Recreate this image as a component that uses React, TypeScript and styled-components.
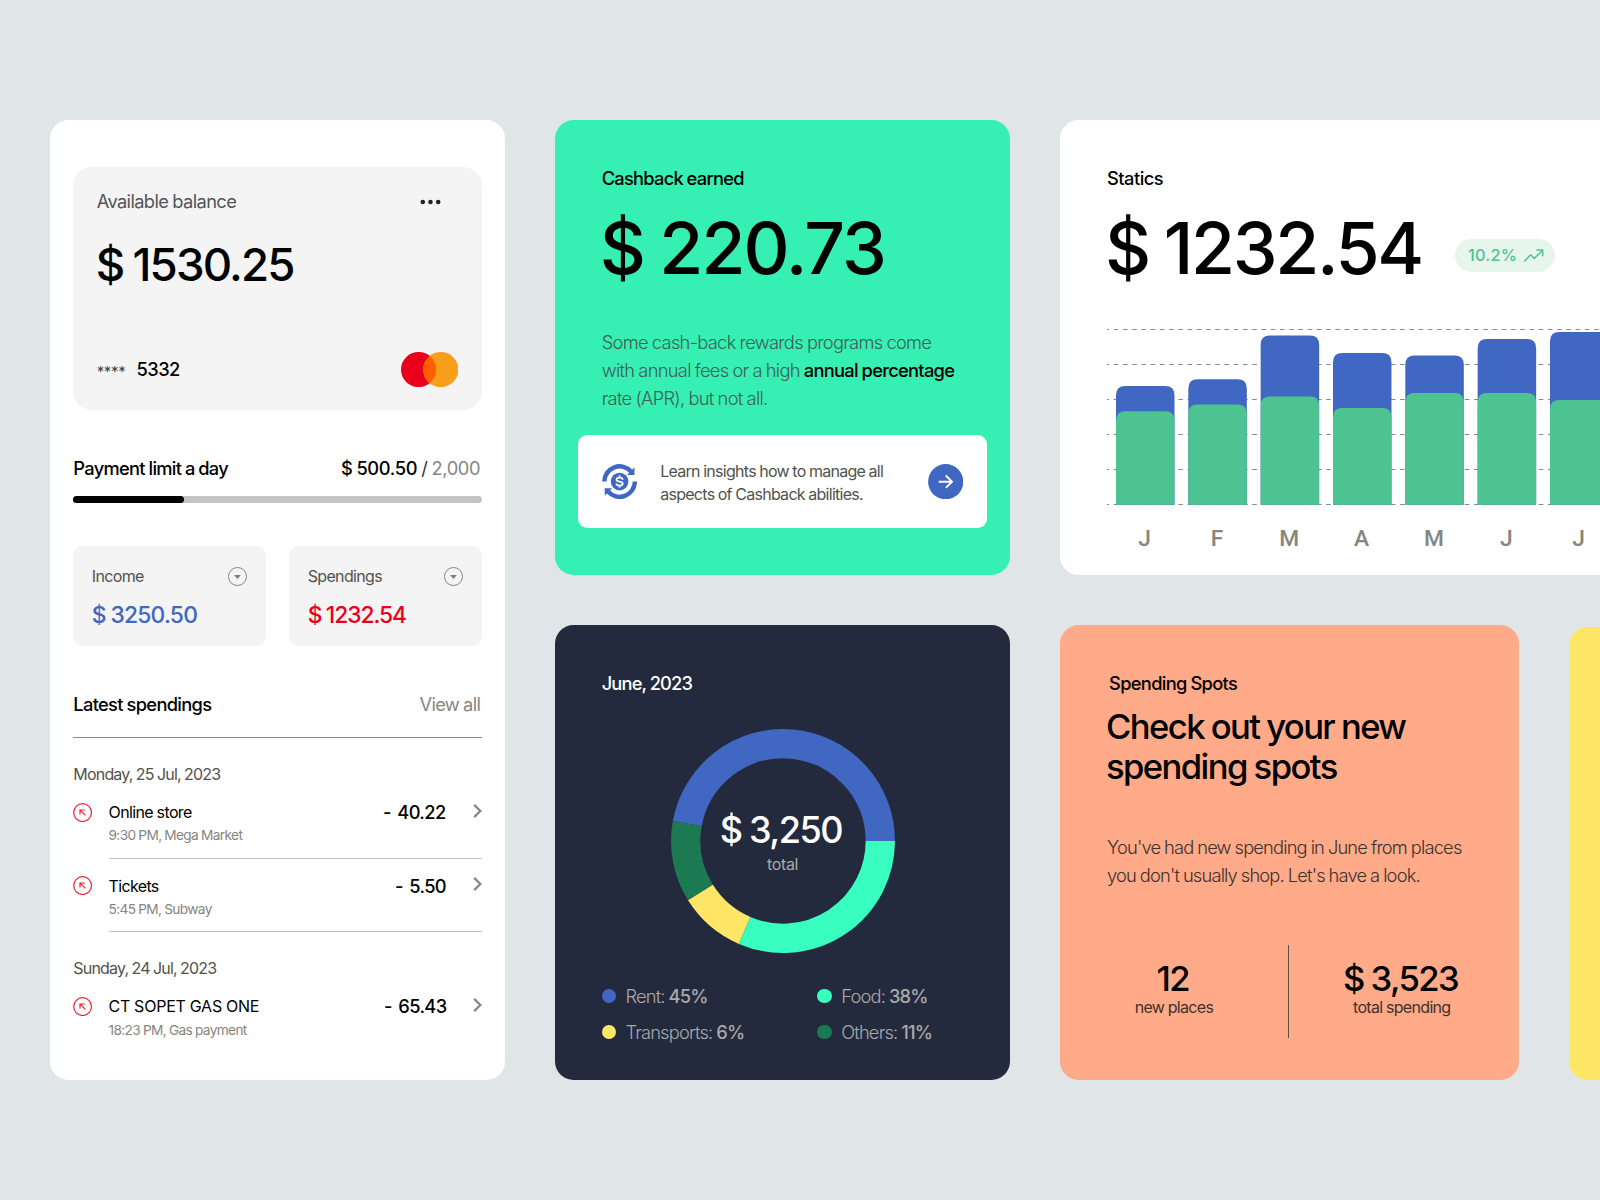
import React from "react";
import styled, { createGlobalStyle, css } from "styled-components";

const sans = `Inter, "Liberation Sans", sans-serif`;

const c = {
  page: "#e0e6e8",
  black: "#000",
  blue: "#4067c1",
  red: "#eb001b",
  mint: "#38ffc0",
  cashback: "#36f0b3",
  navy: "#242a3d",
  peach: "#ffaa88",
  yellow: "#ffe666",
  forest: "#1c7a52",
  bar: "#4dc391",
  tile: "#f4f4f4",
  grey: "#86867f",
  text: "#52524c",
};

const GlobalStyle = createGlobalStyle`
  *, *::before, *::after { box-sizing: border-box; }
  html, body { margin: 0; padding: 0; background: ${c.page}; }
  body { font-family: ${sans}; -webkit-font-smoothing: antialiased; color: ${c.black}; }
  svg { display: block; flex: none; }
`;

const font = (size: number, line: number, weight: number, track = -0.03) => css`
  font-size: ${size}px;
  line-height: ${line}px;
  font-weight: ${weight};
  letter-spacing: ${track}em;
  word-spacing: -0.025em;
  white-space: nowrap;
`;

/* ---------- page ---------- */

const Page = styled.main`
  width: 1600px;
  height: 1200px;
  overflow: hidden;
  padding: 120px 0 0 50px;
  background: ${c.page};
  display: flex;
  gap: 50px;
`;

const Column = styled.div<{ $width: number }>`
  width: ${(p) => p.$width}px;
  flex: none;
  display: flex;
  flex-direction: column;
  gap: 50px;
`;

const Row = styled.div`
  display: flex;
  align-items: flex-start;
  gap: 50.5px;
`;

const Panel = styled.section<{ $bg: string }>`
  background: ${(p) => p.$bg};
  border-radius: 18.5px;
`;

const Eyebrow = styled.h2<{ $color?: string; $track?: number }>`
  margin: 0;
  color: ${(p) => p.$color ?? c.black};
  ${(p) => font(18.3, 24, 500, p.$track ?? -0.037)}
`;

const Huge = styled.div<{ $track: number }>`
  margin: 15.3px 0 0 -2px;
  ${(p) => font(71.5, 84, 530, p.$track)}
`;

/* ---------- account panel ---------- */

const AccountPanel = styled(Panel)`
  height: 960px;
  padding: 46.7px 23.33px 0;
`;

const BalanceCard = styled.div`
  height: 243.6px;
  padding: 22.5px 23.33px 23px;
  border-radius: 18.5px;
  background: ${c.tile};
  display: flex;
  flex-direction: column;
`;

const BalanceTop = styled.div`
  display: flex;
  justify-content: space-between;
  align-items: center;
  padding-right: 17px;
  svg { margin-top: 1px; }
`;

const BalanceLabel = styled.span`
  color: #505655;
  ${font(18.3, 24, 400, -0.034)}
`;

const BalanceAmount = styled.div`
  margin: 24px 0 0 -1px;
  ${font(45.6, 56, 520, -0.04)}
`;

const BalanceBottom = styled.div`
  margin-top: auto;
  display: flex;
  align-items: center;
  justify-content: space-between;
`;

const CardNumber = styled.div`
  display: flex;
  align-items: center;
  gap: 11px;
  padding-bottom: 1px;
  ${font(18.3, 24, 500, -0.03)}
`;

const Mask = styled.span`
  color: #444;
  ${font(15, 24, 400, -0.02)}
  padding-top: 5px;
`;

const SplitRow = styled.div`
  margin-top: 46px;
  display: flex;
  justify-content: space-between;
`;

const Limit = styled.span`
  margin-right: 1.5px;
  ${font(18.3, 24, 500, -0.02)}
  em { font-style: normal; font-weight: 400; color: #333; }
  small { font-size: inherit; font-weight: 400; color: ${c.grey}; }
`;

const Track = styled.div`
  margin-top: 15.4px;
  height: 7px;
  border-radius: 4px;
  background: #c3c5c4;
`;

const Fill = styled.div`
  width: 111px;
  height: 7px;
  border-radius: 4px;
  background: ${c.black};
`;

const Tiles = styled.div`
  margin-top: 43.2px;
  display: grid;
  grid-template-columns: 1fr 1fr;
  gap: 23.33px;
`;

const Tile = styled.div`
  height: 100px;
  padding: 20.2px 18.5px 0;
  border-radius: 9.3px;
  background: ${c.tile};
`;

const TileHead = styled.div`
  display: flex;
  justify-content: space-between;
  align-items: center;
  color: ${c.text};
  ${font(16, 20, 380, -0.041)}
`;

const TileAmount = styled.div<{ $color: string; $track: number }>`
  margin-top: 14.8px;
  color: ${(p) => p.$color};
  ${(p) => font(22.8, 28, 500, p.$track)}
`;

const ListHead = styled.div`
  margin-top: 46px;
  padding-bottom: 21.2px;
  border-bottom: 1px solid #8d8d8b;
  display: flex;
  justify-content: space-between;
`;

const ViewAll = styled.span`
  margin-right: 1.5px;
  color: ${c.grey};
  ${font(18.3, 24, 400, -0.037)}
`;

const DateLabel = styled.div`
  margin: 25.7px 0 18.4px;
  color: ${c.text};
  ${font(16, 20, 380, -0.051)}
`;

const Item = styled.div`
  display: flex;
  gap: 16px;
  & + & { margin-top: 17.2px; }
`;

const ItemIcon = styled.div`
  width: 19.2px;
  flex: none;
  padding-top: 0.4px;
`;

const ItemBody = styled.div<{ $line: boolean }>`
  flex: 1;
  padding-bottom: 13.2px;
  border-bottom: 1px solid ${(p) => (p.$line ? "#c0c1c0" : "transparent")};
`;

const ItemRow = styled.div`
  display: flex;
  height: 20px;
  svg { margin-top: 1.4px; }
`;

const ItemTitle = styled.span<{ $track: number }>`
  flex: 1;
  ${(p) => font(16, 20, 400, p.$track)}
`;

const ItemAmount = styled.span<{ $inset: number }>`
  margin-right: ${(p) => p.$inset}px;
  display: flex;
  gap: 6.3px;
  ${font(18.3, 20, 500, -0.032)}
`;

const ItemNote = styled.div`
  margin-top: 4.3px;
  color: ${c.grey};
  ${font(13.7, 18, 380, -0.047)}
`;

/* ---------- cashback panel ---------- */

const SquarePanel = styled(Panel)`
  height: 455px;
  padding: 46.4px 46.7px 0;
`;

const Copy = styled.p<{ $top: number; $color: string; $track: number }>`
  margin: ${(p) => p.$top}px 0 0;
  color: ${(p) => p.$color};
  ${(p) => font(18.3, 28, 350, p.$track)}
  strong { font-weight: 500; letter-spacing: -0.039em; color: ${c.black}; }
`;

const Insight = styled.div`
  margin: 22.9px -23.33px 0;
  height: 93px;
  padding: 0 23.33px;
  border-radius: 9.3px;
  background: #fff;
  display: flex;
  align-items: center;
`;

const InsightText = styled.p`
  margin: 0 0 0 23.3px;
  padding-top: 2.2px;
  flex: 1;
  color: ${c.text};
  ${font(16, 23, 370, -0.045)}
`;

/* ---------- month panel ---------- */

const Donut = styled.div`
  position: relative;
  width: 224px;
  height: 224px;
  margin: 33.4px auto 0;
`;

const DonutLabel = styled.div`
  position: absolute;
  inset: 80.8px 0 auto;
  text-align: center;
`;

const DonutValue = styled.div`
  color: #fff;
  padding-right: 3px;
  ${font(36.1, 40, 500, -0.041)}
`;

const DonutNote = styled.div`
  margin-top: 4.4px;
  color: #a9a9a9;
  ${font(16, 20, 370, -0.02)}
`;

const Legend = styled.div`
  margin-top: 31px;
  display: grid;
  grid-template-columns: 215.8px 1fr;
  row-gap: 12.3px;
`;

const LegendItem = styled.div`
  display: flex;
  align-items: center;
  color: #a9a9a9;
  ${font(18.3, 24, 350, -0.044)}
  b { font-weight: 500; }
`;

const Dot = styled.i<{ $color: string }>`
  width: 14.2px;
  height: 14.2px;
  margin-right: 9.5px;
  border-radius: 50%;
  background: ${(p) => p.$color};
`;

/* ---------- statics panel ---------- */

const StaticsPanel = styled(Panel)`
  width: 960px;
  height: 455px;
  padding: 46.4px 47px 0;
`;

const StaticsTop = styled.div`
  display: flex;
  margin-bottom: 30.3px;
`;

const Pill = styled.div`
  margin: 48.5px 0 0 33.5px;
  width: 99.2px;
  height: 33px;
  border-radius: 17px;
  background: #e6f6ed;
  color: ${c.bar};
  display: flex;
  align-items: center;
  padding-left: 12.6px;
  gap: 7px;
  ${font(16.3, 20, 530, 0.015)}
`;

const Months = styled.div`
  margin: 20.4px 0 0 1.5px;
  display: flex;
`;

const Month = styled.span`
  width: 72.33px;
  text-align: center;
  color: ${c.grey};
  font: 500 22.8px/28px Roboto, sans-serif;
`;

/* ---------- spots panel ---------- */

const SpotsPanel = styled(Panel)`
  width: 458.6px;
  height: 455px;
  padding-top: 46.4px;
`;

const SpotsText = styled.div`
  padding-left: 47px;
`;

const SpotsEyebrow = styled(Eyebrow)`
  padding-left: 2px;
`;

const Headline = styled.h1`
  margin: 10.7px 0 0 -1px;
  ${font(34.6, 40, 500, -0.0455)}
`;

const Stats = styled.div`
  margin-top: 55.6px;
  height: 93px;
  display: grid;
  grid-template-columns: 228px 1fr;
`;

const Stat = styled.div`
  padding-top: 12.7px;
  text-align: center;
  & + & { border-left: 1px solid rgba(60, 50, 50, 0.8); padding-right: 4px; }
`;

const StatValue = styled.div`
  padding-right: 2.5px;
  ${font(34.6, 40, 500, -0.046)}
`;

const StatNote = styled.div`
  margin-top: -0.9px;
  color: #40312d;
  ${font(16, 20, 370, -0.042)}
`;

const YellowPanel = styled(Panel)`
  margin-top: 2px;
  width: 455px;
  height: 453px;
`;

/* ---------- icons ---------- */

const MoreIcon = () => (
  <svg width="21" height="6" viewBox="0 0 21 6" fill="#222">
    <circle cx="2.8" cy="3" r="2.3" />
    <circle cx="10.5" cy="3" r="2.3" />
    <circle cx="18.2" cy="3" r="2.3" />
  </svg>
);

const CardBrand = () => (
  <svg width="57.4" height="35.2" viewBox="0 0 57.4 35.2">
    <circle cx="17.6" cy="17.6" r="17.6" fill="#eb001b" />
    <circle cx="39.8" cy="17.6" r="17.6" fill="#f79e1b" />
    <path d="M28.7 3.94a17.6 17.6 0 0 1 0 27.32a17.6 17.6 0 0 1 0-27.32z" fill="#ff5f00" />
  </svg>
);

const DropIcon = () => (
  <svg width="19" height="19" viewBox="0 0 19 19">
    <circle cx="9.5" cy="9.5" r="9" fill="none" stroke="#868686" />
    <path d="M6.2 8h6.6l-2.6 3.2q-.7.8-1.4 0z" fill="#7d7d7d" />
  </svg>
);

const SpendIcon = () => (
  <svg width="19.2" height="19.2" viewBox="0 0 19.2 19.2" fill="none" stroke="#eb1d35">
    <circle cx="9.6" cy="9.6" r="8.9" strokeWidth="1.2" />
    <path d="M12.4 12.4L7.2 7.2M7 11.5V7h4.8" strokeWidth="1.2" />
  </svg>
);

const ChevronIcon = () => (
  <svg width="9" height="14" viewBox="0 0 9 14" fill="none" stroke={c.grey} strokeWidth="2.2">
    <path d="M1.2 .9L7.4 7L1.2 13.1" />
  </svg>
);

const CashbackIcon = () => (
  <svg width="35.2" height="35.2" viewBox="0 0 35 35" fill="none">
    <g stroke={c.blue} strokeWidth="4.4">
      <path d="M2.3 17.5A15.2 15.2 0 0 1 29 7.6" />
      <path d="M32.7 17.5A15.2 15.2 0 0 1 6 27.4" />
    </g>
    <path d="M32.3 3.3v7.6h-7.4zM2.7 31.7v-7.6h7.4z" fill={c.blue} />
    <circle cx="17.5" cy="17.5" r="8.8" fill={c.blue} />
    <path
      d="M20.6 15.6C20.6 14.1 19.2 13.5 17.5 13.5S14.4 14.2 14.4 15.6C14.4 18.2 20.7 16.8 20.7 19.5C20.7 20.9 19.2 21.5 17.5 21.5S14.3 20.9 14.3 19.4M17.5 11.3v2.4M17.5 21.3v2.4"
      stroke="#fff"
      strokeWidth="1.7"
    />
  </svg>
);

const ArrowButton = () => (
  <svg width="35.4" height="35.4" viewBox="0 0 35.4 35.4" fill="none">
    <circle cx="17.7" cy="17.7" r="17.6" fill={c.blue} />
    <path d="M10.8 17.7H24M17.8 11.5L24 17.7L17.8 23.9" stroke="#fff" strokeWidth="1.9" />
  </svg>
);

const TrendIcon = () => (
  <svg width="20" height="13" viewBox="0 0 20 13" fill="none" stroke={c.bar} strokeWidth="1.5">
    <path d="M.7 12L6.7 5.7L10.2 9.5L18.6 1.2M12.9 1.1H18.7V6.8" strokeLinecap="round" strokeLinejoin="round" />
  </svg>
);

/* ---------- charts ---------- */

const segments = [
  { from: 0, to: 169.7, color: c.blue },
  { from: 169.7, to: 212, color: c.forest },
  { from: 212, to: 246.8, color: c.yellow },
  { from: 246.8, to: 360, color: c.mint },
];

const ringPoint = (deg: number) => {
  const a = (deg * Math.PI) / 180;
  return `${112 + 97.3 * Math.cos(a)} ${112 - 97.3 * Math.sin(a)}`;
};

const DonutChart = () => (
  <svg width="224" height="224" viewBox="0 0 224 224" fill="none" strokeWidth="29.3">
    {segments.map((s) => (
      <path
        key={s.color}
        stroke={s.color}
        d={`M${ringPoint(s.from)}A97.3 97.3 0 ${s.to - s.from > 180 ? 1 : 0} 0 ${ringPoint(s.to)}`}
      />
    ))}
  </svg>
);

const bars = [
  { month: "J", income: 118.7, spent: 93.5 },
  { month: "F", income: 125.5, spent: 100.3 },
  { month: "M", income: 169.3, spent: 108.3 },
  { month: "A", income: 151.7, spent: 96.7 },
  { month: "M", income: 149.2, spent: 111.7 },
  { month: "J", income: 165.6, spent: 111.7 },
  { month: "J", income: 172.6, spent: 104.7 },
];

const barPath = (x: number, h: number) =>
  `M${x} 184.7v${-(h - 9.3)}q0-9.3 9.3-9.3h39.9q9.3 0 9.3 9.3v${h - 9.3}z`;

const BarChart = () => (
  <svg width="520" height="185" viewBox="0 0 520 185">
    {[0, 1, 2, 3, 4, 5].map((i) => (
      <path
        key={i}
        d={`M0 ${9.5 + i * 35}H520`}
        stroke="#8a8a8a"
        strokeDasharray="4.62 4.62"
        strokeDashoffset="2.6"
      />
    ))}
    {bars.map((b, i) => (
      <g key={i}>
        <path d={barPath(9 + i * 72.33, b.income)} fill={c.blue} />
        <path d={barPath(9 + i * 72.33, b.spent)} fill={c.bar} />
      </g>
    ))}
  </svg>
);

/* ---------- list data ---------- */

type Spending = { title: string; note: string; amount: string; inset: number; track: number; line: boolean };

const monday: Spending[] = [
  { title: "Online store", note: "9:30 PM, Mega Market", amount: "40.22", inset: 27, track: -0.038, line: true },
  { title: "Tickets", note: "5:45 PM, Subway", amount: "5.50", inset: 26.6, track: -0.04, line: true },
];

const sunday: Spending[] = [
  { title: "CT SOPET GAS ONE", note: "18:23 PM, Gas payment", amount: "65.43", inset: 26, track: -0.012, line: false },
];

const SpendingItem = ({ title, note, amount, inset, track, line }: Spending) => (
  <Item>
    <ItemIcon>
      <SpendIcon />
    </ItemIcon>
    <ItemBody $line={line}>
      <ItemRow>
        <ItemTitle $track={track}>{title}</ItemTitle>
        <ItemAmount $inset={inset}>
          <span>-</span>
          <span>{amount}</span>
        </ItemAmount>
        <ChevronIcon />
      </ItemRow>
      <ItemNote>{note}</ItemNote>
    </ItemBody>
  </Item>
);

export default function App() {
  return (
    <>
      <GlobalStyle />
      <Page>
        <Column $width={455}>
          <AccountPanel $bg="#fff">
            <BalanceCard>
              <BalanceTop>
                <BalanceLabel>Available balance</BalanceLabel>
                <MoreIcon />
              </BalanceTop>
              <BalanceAmount>$ 1530.25</BalanceAmount>
              <BalanceBottom>
                <CardNumber>
                  <Mask>****</Mask>
                  <span>5332</span>
                </CardNumber>
                <CardBrand />
              </BalanceBottom>
            </BalanceCard>

            <SplitRow>
              <Eyebrow $track={-0.039}>Payment limit a day</Eyebrow>
              <Limit>
                $ 500.50 <em>/</em> <small>2,000</small>
              </Limit>
            </SplitRow>
            <Track>
              <Fill />
            </Track>

            <Tiles>
              <Tile>
                <TileHead>
                  Income
                  <DropIcon />
                </TileHead>
                <TileAmount $color={c.blue} $track={-0.034}>$ 3250.50</TileAmount>
              </Tile>
              <Tile>
                <TileHead>
                  Spendings
                  <DropIcon />
                </TileHead>
                <TileAmount $color={c.red} $track={-0.046}>$ 1232.54</TileAmount>
              </Tile>
            </Tiles>

            <ListHead>
              <Eyebrow>Latest spendings</Eyebrow>
              <ViewAll>View all</ViewAll>
            </ListHead>
            <DateLabel>Monday, 25 Jul, 2023</DateLabel>
            {monday.map((s) => (
              <SpendingItem key={s.title} {...s} />
            ))}
            <DateLabel>Sunday, 24 Jul, 2023</DateLabel>
            {sunday.map((s) => (
              <SpendingItem key={s.title} {...s} />
            ))}
          </AccountPanel>
        </Column>

        <Column $width={455}>
          <SquarePanel $bg={c.cashback}>
            <Eyebrow $track={-0.041}>Cashback earned</Eyebrow>
            <Huge $track={-0.027}>$ 220.73</Huge>
            <Copy $top={38.4} $color="#3d5f55" $track={-0.038}>
              Some cash-back rewards programs come
              <br />
              with annual fees or a high <strong>annual percentage</strong>
              <br />
              rate (APR), but not all.
            </Copy>
            <Insight>
              <CashbackIcon />
              <InsightText>
                Learn insights how to manage all
                <br />
                aspects of Cashback abilities.
              </InsightText>
              <ArrowButton />
            </Insight>
          </SquarePanel>

          <SquarePanel $bg={c.navy}>
            <Eyebrow $color="#fff" $track={-0.046}>June, 2023</Eyebrow>
            <Donut>
              <DonutChart />
              <DonutLabel>
                <DonutValue>$ 3,250</DonutValue>
                <DonutNote>total</DonutNote>
              </DonutLabel>
            </Donut>
            <Legend>
              <LegendItem>
                <Dot $color={c.blue} />
                <span>Rent: <b>45%</b></span>
              </LegendItem>
              <LegendItem>
                <Dot $color={c.mint} />
                <span>Food: <b>38%</b></span>
              </LegendItem>
              <LegendItem>
                <Dot $color={c.yellow} />
                <span>Transports: <b>6%</b></span>
              </LegendItem>
              <LegendItem>
                <Dot $color={c.forest} />
                <span>Others: <b>11%</b></span>
              </LegendItem>
            </Legend>
          </SquarePanel>
        </Column>

        <Column $width={964}>
          <StaticsPanel $bg="#fff">
            <Eyebrow $track={-0.028}>Statics</Eyebrow>
            <StaticsTop>
              <Huge $track={-0.033}>$ 1232.54</Huge>
              <Pill>
                10.2%
                <TrendIcon />
              </Pill>
            </StaticsTop>
            <BarChart />
            <Months>
              {bars.map((b, i) => (
                <Month key={i}>{b.month}</Month>
              ))}
            </Months>
          </StaticsPanel>

          <Row>
            <SpotsPanel $bg={c.peach}>
              <SpotsText>
                <SpotsEyebrow>Spending Spots</SpotsEyebrow>
                <Headline>
                  Check out your new
                  <br />
                  spending spots
                </Headline>
                <Copy $top={47.3} $color="#40312d" $track={-0.045}>
                  You've had new spending in June from places
                  <br />
                  you don't usually shop. Let's have a look.
                </Copy>
              </SpotsText>
              <Stats>
                <Stat>
                  <StatValue>12</StatValue>
                  <StatNote>new places</StatNote>
                </Stat>
                <Stat>
                  <StatValue>$ 3,523</StatValue>
                  <StatNote>total spending</StatNote>
                </Stat>
              </Stats>
            </SpotsPanel>
            <YellowPanel $bg={c.yellow} />
          </Row>
        </Column>
      </Page>
    </>
  );
}
